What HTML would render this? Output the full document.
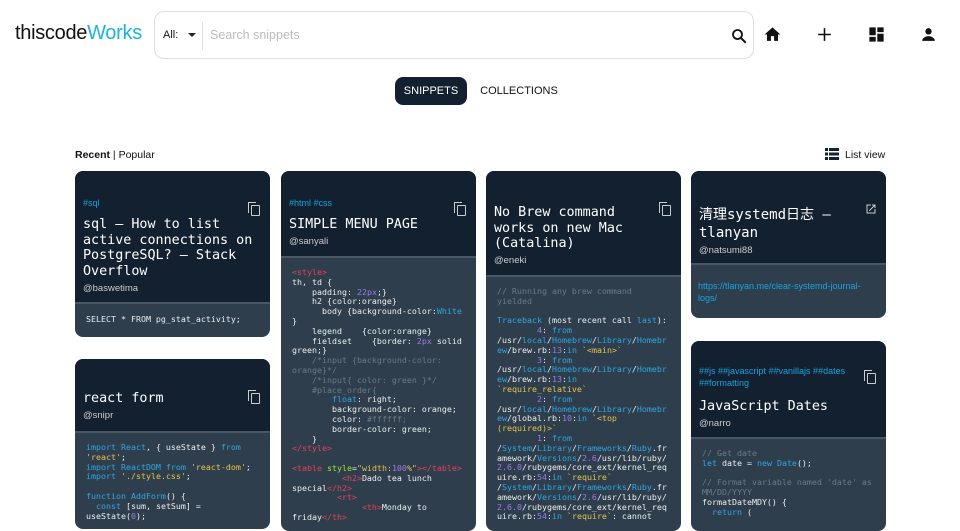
<!DOCTYPE html>
<html><head><meta charset="utf-8"><style>
*{box-sizing:border-box;margin:0;padding:0}
body{width:960px;height:519px;overflow:hidden;background:#fff;font-family:"Liberation Sans",sans-serif;color:#111;position:relative}
.abs{position:absolute}
.logo{left:15px;top:22px;font-size:20px;letter-spacing:-0.3px}
.logo span{color:#1ab3d9}
.search{left:154px;top:11px;width:600px;height:48px;border:1px solid #ddd;border-radius:10px}
.tab{top:77px;height:28px;font-size:11px;line-height:28px;text-align:center}
.card{position:absolute;width:195px;border-radius:8px;overflow:hidden;background:#2e3e4d}
.hd{background:#13202f;color:#fff;position:relative;padding:0 8px;border-bottom:2px solid #4a5866}
.tag{color:#1aa3e0;font-size:9px;line-height:12px}
.tt{font-family:"DejaVu Sans Mono","Noto Sans CJK SC",monospace;font-size:13.4px;line-height:15.7px;color:#fff}
.au{font-size:9.5px;color:#ccc;margin-top:3px}
.cp{position:absolute;right:10px;width:9px;height:11px;border:1.5px solid #ccc;border-radius:1px}
.cp:before{content:"";position:absolute;left:-4px;top:-4px;width:7px;height:10px;border-left:1.5px solid #ccc;border-top:1.5px solid #ccc}
pre{font-family:"DejaVu Sans Mono",monospace;font-size:8.3px;line-height:9.8px;color:#eee;padding:10px 11px;white-space:pre-wrap;overflow-wrap:anywhere}
.k{color:#2fa7e0}.s{color:#e8c44a}.r{color:#e8405a}.c{color:#6b7a88}.n{color:#9d7be8}.g{color:#a6e22e}
</style></head><body>
<div class="abs logo">thiscode<span>Works</span></div>
<div class="abs search">
 <div class="abs" style="left:8px;top:17px;font-size:11px">All:</div>
 <div class="abs" style="left:33px;top:21px;border-left:4px solid transparent;border-right:4px solid transparent;border-top:4px solid #222"></div>
 <div class="abs" style="left:47px;top:10px;width:1px;height:28px;background:#ddd"></div>
 <div class="abs" style="left:55px;top:16px;font-size:12.5px;color:#bbb">Search snippets</div>
 <svg class="abs" style="left:575px;top:15px" width="18" height="18" viewBox="0 0 24 24"><circle cx="10" cy="10" r="6" fill="none" stroke="#111" stroke-width="2.4"/><path d="M14.5 14.5L21 21" stroke="#111" stroke-width="2.6"/></svg>
</div>
<svg class="abs" style="left:763px;top:25px" width="19" height="19" viewBox="0 0 24 24"><path d="M10 20v-6h4v6h5v-8h3L12 3 2 12h3v8z" fill="#111"/></svg>
<svg class="abs" style="left:815px;top:25px" width="19" height="19" viewBox="0 0 24 24"><path d="M12 4v16M4 12h16" stroke="#111" stroke-width="2"/></svg>
<svg class="abs" style="left:867px;top:25px" width="19" height="19" viewBox="0 0 24 24"><path d="M3 13h8V3H3zm0 8h8v-6H3zm10 0h8V11h-8zm0-18v6h8V3z" fill="#111"/></svg>
<svg class="abs" style="left:919px;top:25px" width="19" height="19" viewBox="0 0 24 24"><circle cx="12" cy="8" r="4" fill="#111"/><path d="M4 20c0-4 5-6 8-6s8 2 8 6z" fill="#111"/></svg>
<div class="abs tab" style="left:395px;width:72px;background:#13202f;color:#fff;border-radius:8px">SNIPPETS</div>
<div class="abs tab" style="left:478px;width:82px;color:#111">COLLECTIONS</div>
<div class="abs" style="left:75px;top:149px;font-size:10.5px"><b>Recent</b> | Popular</div>
<svg class="abs" style="left:825px;top:148px" width="14" height="12" viewBox="0 0 14 12"><path d="M0 0h3v3H0zM4 0h10v3H4zM0 4.5h3v3H0zM4 4.5h10v3H4zM0 9h3v3H0zM4 9h10v3H4z" fill="#13202f"/></svg>
<div class="abs" style="left:845px;top:149px;font-size:10.5px">List view</div>

<div class="card" style="left:75px;top:171px;height:166px">
 <div class="hd" style="height:133px;padding-top:26px"><div class="tag">#sql</div><div class="cp" style="top:34px"></div>
 <div class="tt" style="margin-top:8px">sql – How to list active connections on PostgreSQL? – Stack Overflow</div><div class="au">@baswetima</div></div>
 <pre style="padding-top:11px">SELECT * FROM pg_stat_activity;</pre>
</div>

<div class="card" style="left:75px;top:359px;height:170px">
 <div class="hd" style="height:74px;padding-top:32px"><div class="cp" style="top:34px"></div>
 <div class="tt">react form</div><div class="au">@snipr</div></div>
 <pre><span class="k">import React</span>, { useState } <span class="k">from</span> <span class="s">'react'</span>;
<span class="k">import ReactDOM from</span> <span class="s">'react-dom'</span>;
<span class="k">import</span> <span class="s">'./style.css'</span>;

<span class="k">function AddForm</span>() {
  <span class="k">const</span> [sum, setSum] = useState(<span class="n">0</span>);</pre>
</div>

<div class="card" style="left:281px;top:171px;height:360px">
 <div class="hd" style="height:87px;padding-top:26px"><div class="tag">#html #css</div><div class="cp" style="top:34px"></div>
 <div class="tt" style="margin-top:8px">SIMPLE MENU PAGE</div><div class="au">@sanyali</div></div>
 <pre><span class="r">&lt;style&gt;</span>
th, td {
    padding: <span class="n">22px</span>;}
    h2 {color:orange}
      body {background-color:<span class="k">White</span>
}
    legend    {color:orange}
    fieldset    {border: <span class="n">2px</span> solid green;}
    <span class="c">/*input {background-color: orange}*/</span>
    <span class="c">/*input{ color: green }*/</span>
    <span class="c">#place_order{</span>
        <span class="k">float</span>: right;
        background-color: orange;
        color: <span class="c">#ffffff;</span>
        border-color: green;
    }
<span class="r">&lt;/style&gt;</span>

<span class="r">&lt;table</span> <span class="g">style</span>=<span class="s">"width:<span class="n">100</span>%"</span><span class="r">&gt;&lt;/table&gt;</span>
          <span class="r">&lt;h2&gt;</span>Dado tea lunch special<span class="r">&lt;/h2&gt;</span>
         <span class="r">&lt;rt&gt;</span>
              <span class="r">&lt;th&gt;</span>Monday to friday<span class="r">&lt;/th&gt;</span></pre>
</div>

<div class="card" style="left:486px;top:171px;height:360px">
 <div class="hd" style="height:106px;padding-top:34px"><div class="cp" style="top:34px"></div>
 <div class="tt" style="width:150px">No Brew command works on new Mac (Catalina)</div><div class="au">@eneki</div></div>
 <pre><span class="c">// Running any brew command yielded</span>

<span class="k">Traceback</span> (most recent call <span class="k">last</span>):
        <span class="n">4</span>: <span class="k">from</span> /usr/<span class="k">local</span>/<span class="k">Homebrew</span>/<span class="k">Library</span>/<span class="k">Homebrew</span>/brew.rb:<span class="n">13</span>:<span class="k">in</span> <span class="s">`&lt;main&gt;`</span>
        <span class="n">3</span>: <span class="k">from</span> /usr/<span class="k">local</span>/<span class="k">Homebrew</span>/<span class="k">Library</span>/<span class="k">Homebrew</span>/brew.rb:<span class="n">13</span>:<span class="k">in</span> <span class="s">`require_relative`</span>
        <span class="n">2</span>: <span class="k">from</span> /usr/<span class="k">local</span>/<span class="k">Homebrew</span>/<span class="k">Library</span>/<span class="k">Homebrew</span>/global.rb:<span class="n">10</span>:<span class="k">in</span> <span class="s">`&lt;top (required)&gt;`</span>
        <span class="n">1</span>: <span class="k">from</span> /<span class="k">System</span>/<span class="k">Library</span>/<span class="k">Frameworks</span>/<span class="k">Ruby</span>.framework/<span class="k">Versions</span>/<span class="n">2.6</span>/usr/lib/ruby/<span class="n">2.6.0</span>/rubygems/core_ext/kernel_require.rb:<span class="n">54</span>:<span class="k">in</span> <span class="s">`require`</span>
/<span class="k">System</span>/<span class="k">Library</span>/<span class="k">Frameworks</span>/<span class="k">Ruby</span>.framework/<span class="k">Versions</span>/<span class="n">2.6</span>/usr/lib/ruby/<span class="n">2.6.0</span>/rubygems/core_ext/kernel_require.rb:<span class="n">54</span>:<span class="k">in</span> <span class="s">`require`</span>: cannot</pre>
</div>

<div class="card" style="left:691px;top:171px;height:147px">
 <div class="hd" style="height:94px;padding-top:35px">
 <svg class="abs" style="right:9px;top:32px" width="12" height="12" viewBox="0 0 24 24"><path d="M19 19H5V5h7V3H3v18h18v-9h-2zM14 3v2h3.6l-9.8 9.8 1.4 1.4L19 6.4V10h2V3z" fill="#ccc"/></svg>
 <div class="tt" style="line-height:18px;font-size:14px">清理systemd日志 – tlanyan</div><div class="au">@natsumi88</div></div>
 <div style="padding:15px 7px;font-size:9px;line-height:12px;color:#1aa3e0">https://tlanyan.me/clear-systemd-journal-logs/</div>
</div>

<div class="card" style="left:691px;top:341px;height:190px">
 <div class="hd" style="height:98px;padding-top:24px"><div class="tag">##js ##javascript ##vanillajs ##dates ##formatting</div><div class="cp" style="top:32px"></div>
 <div class="tt" style="margin-top:10px">JavaScript Dates</div><div class="au">@narro</div></div>
 <pre><span class="c">// Get date</span>
<span class="k">let</span> date = <span class="k">new Date</span>();

<span class="c">// Format variable named 'date' as MM/DD/YYYY</span>
formatDateMDY() {
  <span class="k">return</span> (</pre>
</div>
</body></html>
